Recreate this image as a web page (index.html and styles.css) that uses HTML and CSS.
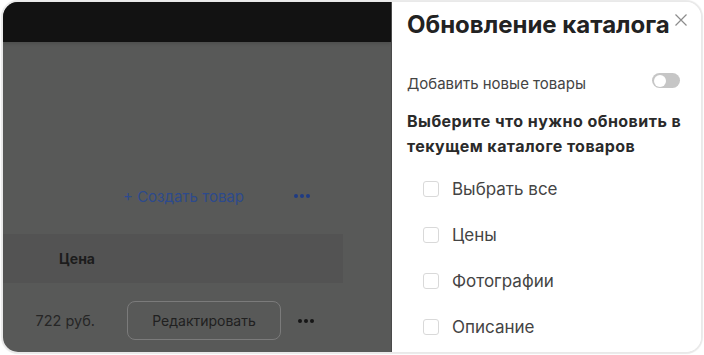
FILE: index.html
```html
<!DOCTYPE html>
<html lang="ru">
<head>
<meta charset="utf-8">
<link rel="stylesheet" href="styles.css">
</head>
<body>
<div class="card">
  <div class="page">
    <div class="topbar"></div>
    <div class="toolbar">
      <span class="create">+ Создать товар</span>
      <span class="dots dots-blue"><i></i><i></i><i></i></span>
    </div>
    <div class="thead">
      <span class="col-price">Цена</span>
    </div>
    <div class="trow">
      <span class="col-price">722 руб.</span>
      <span class="btn">Редактировать</span>
      <span class="dots dots-dark"><i></i><i></i><i></i></span>
    </div>
  </div>
  <aside class="panel">
    <div class="panel-head">
      <h1 class="title">Обновление каталога</h1>
      <svg class="close" width="14" height="14" viewBox="0 0 14 14"><path d="M1.5 1.5L12.5 12.5M12.5 1.5L1.5 12.5" stroke="#8c8c8c" stroke-width="1.2" fill="none"/></svg>
    </div>
    <div class="switch-row">
      <span class="switch-label">Добавить новые товары</span>
      <span class="switch"><span class="knob"></span></span>
    </div>
    <p class="question">Выберите что нужно обновить в текущем каталоге товаров</p>
    <ul class="checks">
      <li class="check"><span class="box"></span>Выбрать все</li>
      <li class="check"><span class="box"></span>Цены</li>
      <li class="check"><span class="box"></span>Фотографии</li>
      <li class="check"><span class="box"></span>Описание</li>
    </ul>
  </aside>
</div>
</body>
</html>
```

FILE: styles.css
```css
* { box-sizing: border-box; }
html, body { margin: 0; padding: 0; background: #ffffff; }
body { font-family: Inter, "Noto Sans", sans-serif; width: 704px; height: 355px; overflow: hidden; padding: 2px 3px 3px 3px; }

.card {
  display: flex;
  width: 698px;
  height: 350px;
  border-radius: 15px;
  overflow: hidden;
  box-shadow: 0 0 1px 2px #e9e9e9;
}

.page {
  width: 388px;
  flex: none;
  background: #585958;
  display: flex;
  flex-direction: column;
}
.topbar {
  height: 40px;
  flex: none;
  background: #121212;
  box-shadow: 0 2px 3px rgba(0,0,0,0.12);
}
.toolbar {
  display: flex;
  align-items: center;
  height: 24px;
  flex: none;
  margin-top: 142px;
  padding-left: 120px;
}
.create {
  color: #2d4a8c;
  font-size: 15px;
}
.dots { display: flex; gap: 2px; }
.dots i { display: block; width: 4px; height: 4px; border-radius: 50%; }
.dots-blue { margin-left: 50px; }
.dots-blue i { background: #1f3b84; }
.dots-dark i { background: #161616; }

.thead {
  margin-top: 26px;
  width: 340px;
  height: 49px;
  flex: none;
  background: #535353;
  display: flex;
  align-items: center;
}
.col-price {
  width: 92px;
  text-align: right;
}
.thead .col-price { font-weight: 700; color: #1c1c1c; font-size: 14px; }
.trow {
  display: flex;
  align-items: center;
  margin-top: 18px;
  height: 39px;
  flex: none;
}
.trow .col-price { color: #262626; font-size: 14.5px; }
.btn {
  margin-left: 32px;
  width: 154px;
  height: 39px;
  border: 1px solid #7b7b7b;
  border-radius: 8px;
  display: flex;
  align-items: center;
  justify-content: center;
  font-size: 14px;
  color: #202020;
}
.dots-dark { margin-left: 17px; }

.panel {
  flex: 1;
  background: #ffffff;
  padding: 0 0 0 15px;
  border-left: 1px solid #4a4a4a;
  color: #444;
}
.panel-head {
  display: flex;
  align-items: flex-start;
  height: 50px;
}
.title {
  margin: 8px 0 0 0;
  font-size: 24px;
  line-height: 30px;
  font-weight: 700;
  color: #222;
  white-space: nowrap;
}
.close { margin: 11px 0 0 4px; }
.switch-row {
  display: flex;
  align-items: center;
  justify-content: space-between;
  width: 273px;
  margin-top: 22px;
}
.switch-label { font-size: 15px; color: #444; }
.switch {
  width: 28px;
  height: 15px;
  border-radius: 8px;
  background: #c6c6c6;
  display: flex;
  align-items: center;
  padding-left: 2px;
  margin-top: -6px;
}
.knob {
  width: 12px;
  height: 12px;
  border-radius: 50%;
  background: #fff;
}
.question {
  margin: 16px 0 0 0;
  font-size: 16px;
  letter-spacing: 0.45px;
  font-weight: 700;
  line-height: 25px;
  color: #2a2a2a;
  width: 292px;
}
.checks {
  list-style: none;
  margin: 18px 0 0 0;
  padding: 0 0 0 16px;
}
.check {
  display: flex;
  align-items: center;
  height: 24px;
  margin-bottom: 22px;
  font-size: 17px;
  color: #444;
}
.box {
  width: 16px;
  height: 16px;
  border: 1px solid #d9d9d9;
  border-radius: 3px;
  margin-right: 13px;
}
```
